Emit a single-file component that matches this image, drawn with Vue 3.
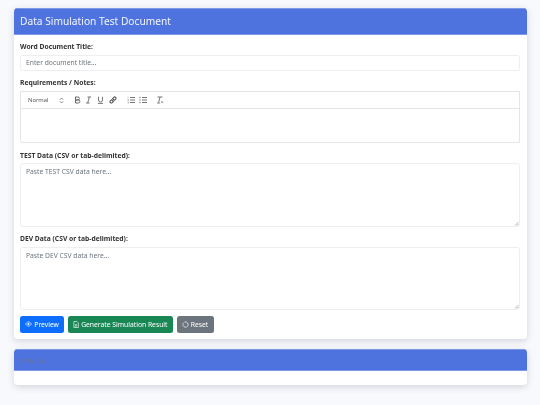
<script setup>
const sections = [
  { label: 'TEST Data (CSV or tab-delimited):', placeholder: 'Paste TEST CSV data here...' },
  { label: 'DEV Data (CSV or tab-delimited):', placeholder: 'Paste DEV CSV data here...' },
]
</script>

<template>
  <main class="page">
    <section class="card">
      <header class="card-header"><h1>Data Simulation Test Document</h1></header>
      <div class="card-body">
        <label class="label first">Word Document Title:</label>
        <input class="input" type="text" placeholder="Enter document title..." />

        <label class="label req">Requirements / Notes:</label>
        <div class="toolbar">
          <span class="picker">Normal
            <svg width="5" height="7" viewBox="0 0 5 7"><path d="M1 2.6 2.5 1 4 2.6M1 4.4 2.5 6 4 4.4" fill="none" stroke="#666" stroke-width=".8"/></svg>
          </span>
          <span class="tools">
            <svg width="7" height="8" viewBox="0 0 7 8"><path d="M1.5 1h2.4a1.4 1.4 0 0 1 0 3H1.5zM1.5 4h2.8a1.5 1.5 0 0 1 0 3H1.5z" fill="none" stroke="#666" stroke-width="1"/></svg>
            <svg width="7" height="8" viewBox="0 0 7 8"><path d="M2.5 1h3.5M1 7h3.5M4.3 1 2.7 7" fill="none" stroke="#666" stroke-width=".9"/></svg>
            <svg width="7" height="8" viewBox="0 0 7 8"><path d="M1.5 .8v3.2a2 2 0 0 0 4 0V.8M1 7.4h5" fill="none" stroke="#666" stroke-width=".9"/></svg>
            <svg width="8" height="8" viewBox="0 0 8 8"><path d="M3.2 2.8 4.8 1.4a1.2 1.2 0 0 1 1.8 1.8L5.2 4.6M4.8 5.2 3.2 6.6A1.2 1.2 0 0 1 1.4 4.8L2.8 3.4M3 5l2-2" fill="none" stroke="#555" stroke-width="1.1"/></svg>
          </span>
          <span class="tools lists">
            <svg width="8" height="8" viewBox="0 0 8 8"><path d="M3 1.5h5M3 4h5M3 6.5h5" stroke="#666" stroke-width=".9"/><path d="M1 .8v1.6M.6 3.4h1v1.1h-1M.6 5.9h1v1.2h-1" fill="none" stroke="#888" stroke-width=".5"/></svg>
            <svg width="8" height="8" viewBox="0 0 8 8"><path d="M3 1.5h5M3 4h5M3 6.5h5" stroke="#666" stroke-width=".9"/><circle cx="1" cy="1.5" r=".7" fill="#777"/><circle cx="1" cy="4" r=".7" fill="#777"/><circle cx="1" cy="6.5" r=".7" fill="#777"/></svg>
          </span>
          <span class="tools clean">
            <svg width="8" height="8" viewBox="0 0 8 8"><path d="M1.5 1h5M4 1 2.6 6.6M1.2 7h2.6" fill="none" stroke="#666" stroke-width=".9"/><path d="M5 5.2l2 2M7 5.2l-2 2" stroke="#666" stroke-width=".6"/></svg>
          </span>
        </div>
        <div class="editor"></div>

        <template v-for="s in sections" :key="s.label">
          <label class="label area-label">{{ s.label }}</label>
          <div class="area-wrap">
            <textarea class="textarea" :placeholder="s.placeholder"></textarea>
            <svg class="grip" width="5" height="5" viewBox="0 0 5 5"><path d="M1 4.5 4.5 1M3 4.5 4.5 3" stroke="#999" stroke-width=".7"/></svg>
          </div>
        </template>

        <div class="actions">
          <button class="btn blue">
            <svg width="7" height="6" viewBox="0 0 16 14"><path d="M1 7s3-5 7-5 7 5 7 5-3 5-7 5-7-5-7-5z" fill="none" stroke="#fff" stroke-width="1.5"/><circle cx="8" cy="7" r="2.4" fill="#fff"/></svg>
            Preview
          </button>
          <button class="btn green">
            <svg width="6" height="7" viewBox="0 0 14 16"><path d="M2 1h7l3.5 3.5V15H2z" fill="none" stroke="#fff" stroke-width="1.5"/><path d="M4.5 8h5M4.5 10h5M4.5 12h5" stroke="#fff" stroke-width="1.2"/></svg>
            Generate Simulation Result
          </button>
          <button class="btn gray">
            <svg width="7" height="7" viewBox="0 0 16 16"><path d="M4.2 3.6A6 6 0 1 0 8 2.2" fill="none" stroke="#fff" stroke-width="1.5"/><path d="M8 .2v4L5.6 2.2z" fill="#fff"/></svg>
            Reset
          </button>
        </div>
      </div>
    </section>

    <section class="card preview">
      <header class="card-header short"><h2>Preview</h2></header>
      <div class="preview-body"></div>
    </section>
  </main>
</template>

<style scoped>
.page {
  box-sizing: border-box;
  width: 540px;
  height: 405px;
  padding: 8px 13px 0 13.5px;
  background: #f8f9fc;
  font-family: "Noto Sans", sans-serif;
  overflow: hidden;
  filter: blur(.3px);
}
.card {
  background: #fff;
  border-radius: 4px;
  box-shadow: 0 2px 7px rgba(60, 70, 100, .2);
  overflow: hidden;
}
.card-header {
  height: 26.5px;
  display: flex;
  align-items: center;
  padding: 0 6.5px;
  background: #4e73df;
  box-sizing: border-box;
  border-top: 1px solid #7e98e8;
  border-bottom: 1px solid #7e98e8;
}
h1 {
  margin: 0;
  font-size: 10.2px;
  font-weight: 400;
  color: #f2f5fd;
}
.card-body {
  padding: 6.5px 7.5px 6.5px 6.5px;
  display: flex;
  flex-direction: column;
}
.label {
  font-size: 6.75px;
  line-height: 10px;
  font-weight: 700;
  color: #333;
}
.first { margin-top: .5px; margin-bottom: 3.5px; }
.req { margin-top: 7px; margin-bottom: 3.5px; }
.area-label { margin-top: 7.5px; margin-bottom: 2.5px; }
.input {
  box-sizing: border-box;
  height: 15.5px;
  border: 1px solid #eceef1;
  border-radius: 2.5px;
  padding: 0 5px;
  font: 6.75px "Noto Sans", sans-serif;
  outline: none;
}
.input::placeholder, .textarea::placeholder { color: #6c757d; opacity: 1; }
.toolbar {
  box-sizing: border-box;
  height: 18px;
  border: 1px solid #e4e5e8;
  display: flex;
  align-items: center;
  padding-left: 7px;
  color: #555;
}
.picker {
  width: 41px;
  font-size: 5.8px;
  display: flex;
  justify-content: space-between;
  align-items: center;
  padding-right: 5px;
  box-sizing: border-box;
}
.tools { display: flex; gap: 4.7px; margin-left: 4.5px; align-items: center; }
.lists { margin-left: 10px; }
.clean { margin-left: 9px; }
.editor {
  box-sizing: border-box;
  height: 34px;
  border: 1px solid #e4e5e8;
  border-top: 0;
  border-radius: 0 0 2.5px 2.5px;
}
.area-wrap { position: relative; }
.textarea {
  display: block;
  box-sizing: border-box;
  width: 100%;
  height: 63.5px;
  border: 1px solid #eceef1;
  border-radius: 2.5px;
  padding: 3px 5px;
  font: 6.75px/10px "Noto Sans", sans-serif;
  outline: none;
  resize: none;
}
.grip { position: absolute; right: 1px; bottom: 1px; }
.actions { display: flex; gap: 3.7px; margin-top: 6px; }
.btn {
  height: 16.5px;
  display: inline-flex;
  align-items: center;
  gap: 2px;
  border: 1px solid transparent;
  border-radius: 2.5px;
  padding: 0 4.3px;
  color: #fff;
  font: 6.75px "Noto Sans", sans-serif;
}
.blue { background: #0d6efd; }
.green { background: #198754; }
.gray { background: #6c757d; }
.preview { margin-top: 10px; }
.short { height: 22px; }
h2 {
  margin: 0;
  font-size: 7.2px;
  font-weight: 400;
  color: #6a7390;
}
.preview-body { height: 14px; }
</style>
